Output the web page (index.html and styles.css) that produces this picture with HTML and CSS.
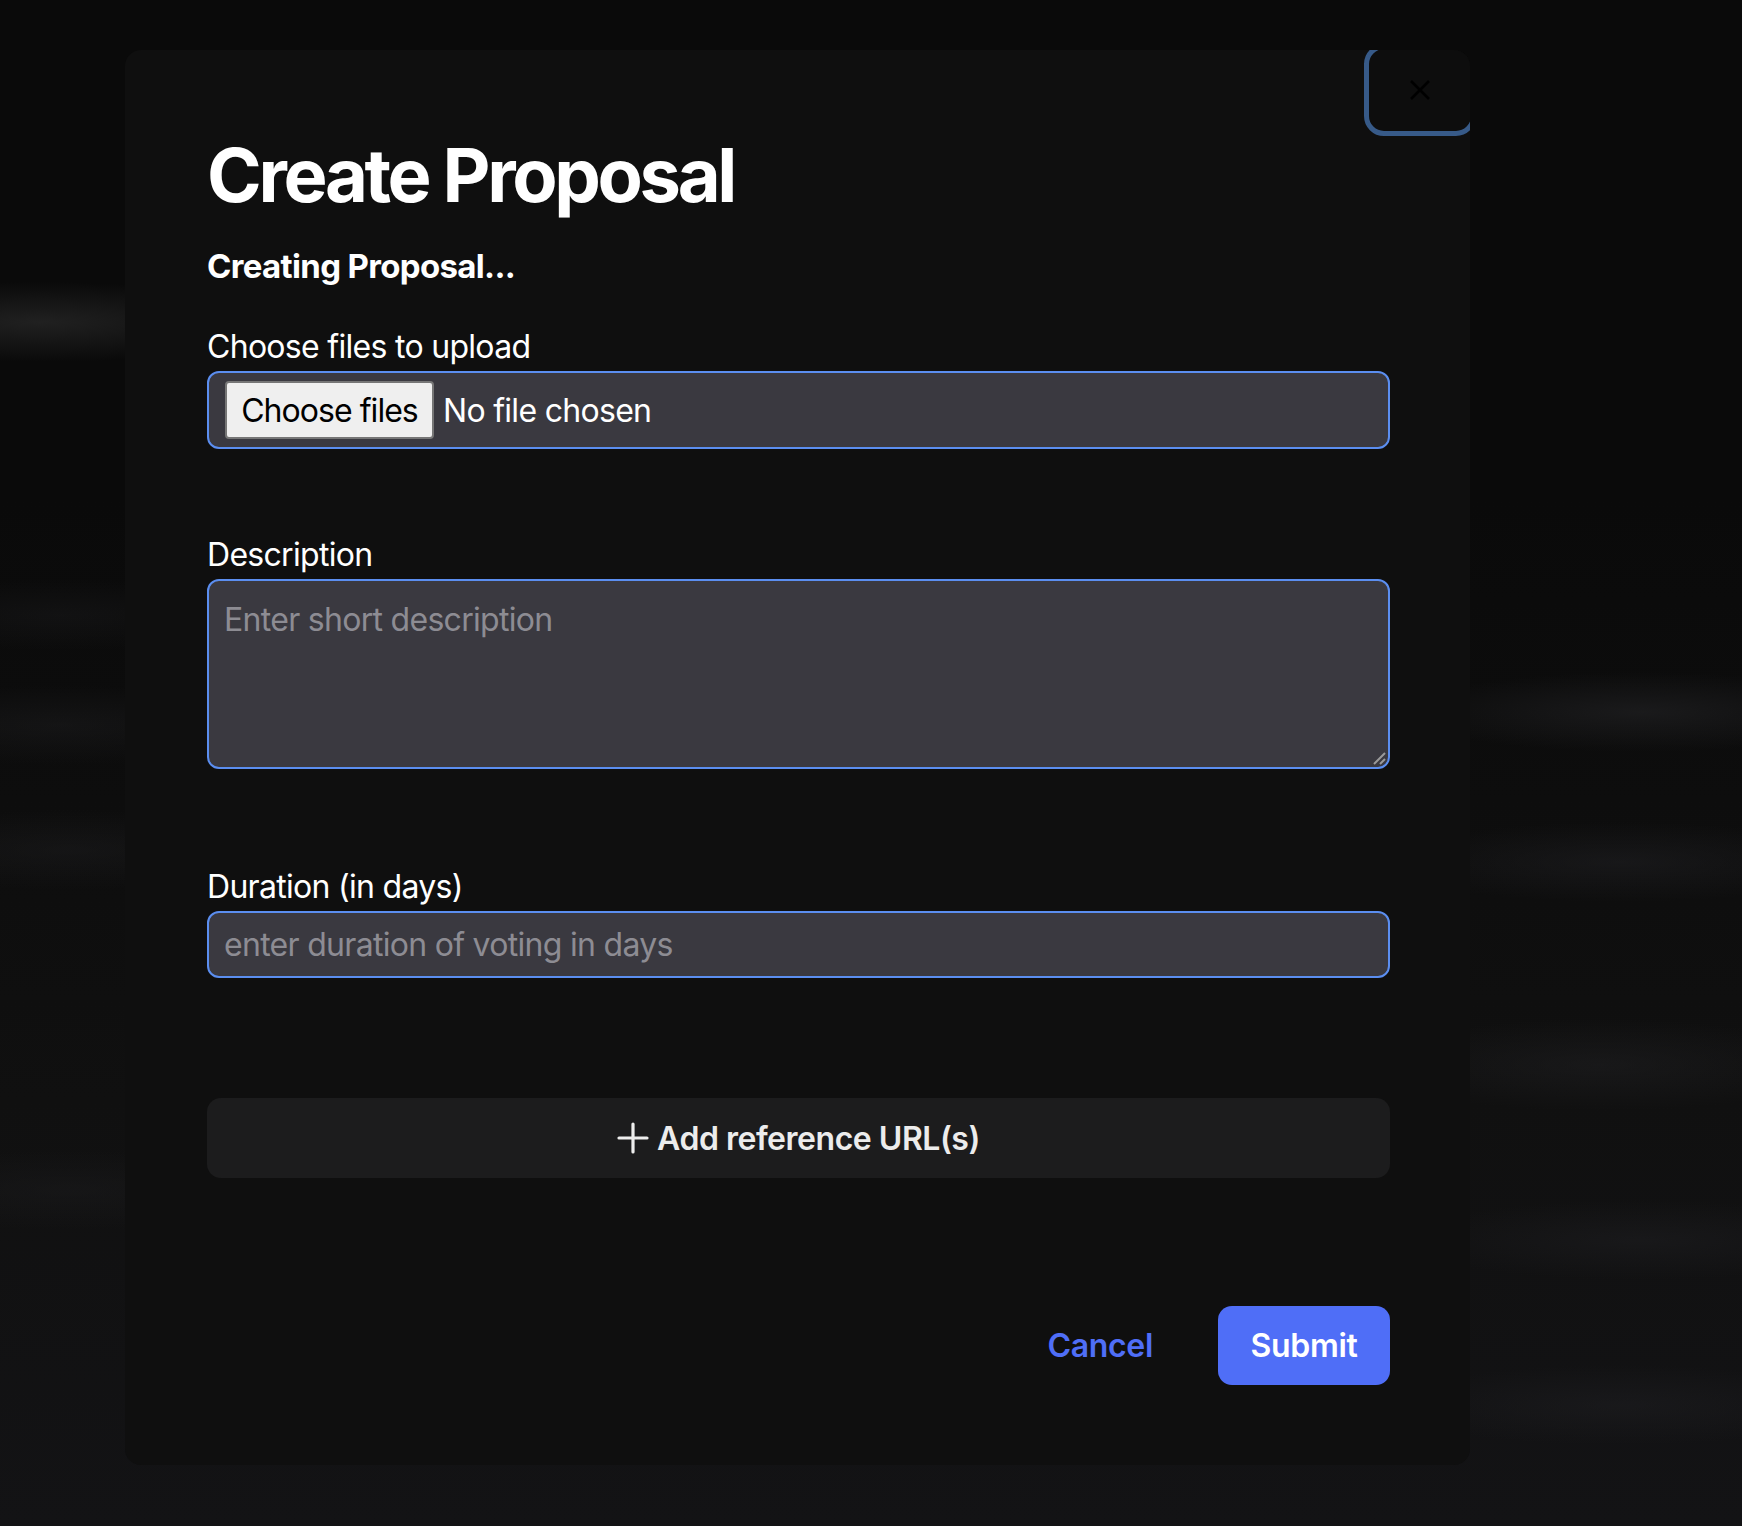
FILE: index.html
```html
<!DOCTYPE html>
<html lang="en">
<head>
<meta charset="utf-8">
<title>Create Proposal</title>
<link rel="stylesheet" href="styles.css">
</head>
<body>
<div class="overlay">
  <div class="modal">
    <button class="close-btn" aria-label="Close">
      <svg width="22" height="22" viewBox="0 0 22 22"><path d="M2 2 L20 20 M20 2 L2 20" stroke="#000" stroke-width="2.6" fill="none"/></svg>
    </button>
    <h1 class="title">Create Proposal</h1>
    <p class="status">Creating Proposal...</p>

    <div class="field field-files">
      <label class="label">Choose files to upload</label>
      <div class="file-box">
        <span class="file-btn">Choose files</span>
        <span class="file-name">No file chosen</span>
      </div>
    </div>

    <div class="field field-desc">
      <label class="label">Description</label>
      <div class="textarea-wrap">
        <textarea class="textarea" placeholder="Enter short description"></textarea>
        <svg class="grip" width="14" height="14" viewBox="0 0 14 14"><path d="M13 2 L2 13 M13 8 L8 13" stroke="#9a9a9a" stroke-width="2" fill="none"/></svg>
      </div>
    </div>

    <div class="field field-dur">
      <label class="label">Duration (in days)</label>
      <input class="input" type="text" placeholder="enter duration of voting in days">
    </div>

    <button class="add-ref">
      <svg class="plus" width="32" height="32" viewBox="0 0 32 32"><path d="M16 2 V30 M2 16 H30" stroke="#ededed" stroke-width="3.2" stroke-linecap="round" fill="none"/></svg>
      <span>Add reference URL(s)</span>
    </button>

    <div class="footer">
      <button class="cancel">Cancel</button>
      <button class="submit">Submit</button>
    </div>
  </div>
</div>
</body>
</html>
```

FILE: styles.css
```css
* { box-sizing: border-box; }

html, body {
  margin: 0;
  padding: 0;
}

body {
  font-family: Inter, "Noto Sans", "Liberation Sans", sans-serif;
  color: #fff;
  min-height: 1526px;
  background-color: #0b0b0b;
  background-image:
    radial-gradient(ellipse 240px 40px at 40px 322px, rgba(38,38,38,0.8), rgba(38,38,38,0) 100%),
    radial-gradient(ellipse 200px 36px at 60px 615px, rgba(28,28,30,0.4), rgba(28,28,30,0) 100%),
    radial-gradient(ellipse 220px 40px at 60px 725px, rgba(30,30,32,0.45), rgba(30,30,32,0) 100%),
    radial-gradient(ellipse 220px 40px at 70px 850px, rgba(30,30,32,0.45), rgba(30,30,32,0) 100%),
    radial-gradient(ellipse 220px 40px at 70px 1190px, rgba(30,30,32,0.4), rgba(30,30,32,0) 100%),
    radial-gradient(ellipse 240px 40px at 1640px 712px, rgba(32,32,34,0.7), rgba(32,32,34,0) 100%),
    radial-gradient(ellipse 240px 40px at 1620px 862px, rgba(30,30,33,0.6), rgba(30,30,33,0) 100%),
    radial-gradient(ellipse 240px 46px at 1600px 1065px, rgba(30,30,32,0.6), rgba(30,30,32,0) 100%),
    radial-gradient(ellipse 240px 40px at 1640px 1240px, rgba(30,30,33,0.55), rgba(30,30,33,0) 100%),
    radial-gradient(ellipse 240px 40px at 1620px 1405px, rgba(30,30,33,0.55), rgba(30,30,33,0) 100%),
    linear-gradient(to bottom, #0a0a0a 0px, #0a0a0a 500px, #101010 1100px, #131315 1526px);
}

.overlay {
  padding: 50px 0 0 125px;
}

.modal {
  position: relative;
  width: 1345px;
  height: 1415px;
  padding: 80px 80px 80px 82px;
  background: #0f0f0f;
  border-radius: 16px;
  overflow: hidden;
  display: flex;
  flex-direction: column;
}

.close-btn {
  position: absolute;
  top: -6px;
  right: -6px;
  width: 112px;
  height: 92px;
  border: 5px solid #375a88;
  border-radius: 20px;
  background: #0d0d0d;
  display: flex;
  align-items: center;
  justify-content: center;
  padding: 0;
}

.title {
  margin: 0;
  font-size: 74px;
  line-height: 91px;
  font-weight: 700;
  letter-spacing: -0.045em;
  color: #fff;
}

.status {
  margin: 20px 0 0;
  font-size: 33px;
  line-height: 51px;
  font-weight: 700;
  letter-spacing: -0.02em;
}

.field {
  display: flex;
  flex-direction: column;
}

.field-files { margin-top: 31px; }
.field-desc { margin-top: 82px; }
.field-dur { margin-top: 94px; }

.label {
  font-size: 32px;
  line-height: 48px;
  font-weight: 400;
  letter-spacing: -0.022em;
  color: #fff;
}

.file-box {
  height: 78px;
  border: 2px solid #5b8ef0;
  border-radius: 12px;
  background: #3a3940;
  padding: 8px 16px;
  display: flex;
  align-items: center;
  gap: 9px;
}

.file-btn {
  height: 58px;
  width: 209px;
  display: flex;
  align-items: center;
  justify-content: center;
  background: #efefef;
  border: 2px solid #767676;
  border-radius: 4px;
  color: #000;
  font-size: 32px;
  letter-spacing: -0.03em;
}

.file-name {
  font-size: 32px;
  letter-spacing: -0.022em;
  color: #fff;
}

.textarea-wrap {
  position: relative;
}

.textarea {
  display: block;
  width: 100%;
  height: 190px;
  border: 2px solid #5b8ef0;
  border-radius: 12px;
  background: #3a3940;
  padding: 15px 15px 13px;
  font-family: inherit;
  font-size: 32px;
  line-height: 48px;
  letter-spacing: -0.022em;
  color: #fff;
  outline: none;
  resize: none;
}

.grip {
  position: absolute;
  right: 4px;
  bottom: 4px;
}

.input {
  display: block;
  width: 100%;
  height: 67px;
  border: 2px solid #5b8ef0;
  border-radius: 12px;
  background: #3a3940;
  padding: 0 15px;
  font-family: inherit;
  font-size: 32px;
  letter-spacing: -0.022em;
  color: #fff;
  outline: none;
}

.textarea::placeholder,
.input::placeholder {
  color: #8d8c93;
}

.add-ref {
  margin-top: 120px;
  height: 80px;
  width: 100%;
  border: none;
  border-radius: 14px;
  background: #1c1c1d;
  color: #ececec;
  font-family: inherit;
  font-size: 32px;
  font-weight: 600;
  letter-spacing: -0.015em;
  display: flex;
  align-items: center;
  justify-content: center;
  gap: 8px;
}

.plus { display: block; }

.footer {
  margin-top: 128px;
  display: flex;
  justify-content: flex-end;
  align-items: center;
  gap: 33px;
}

.cancel,
.submit {
  height: 79px;
  font-family: inherit;
  font-size: 32px;
  font-weight: 600;
  letter-spacing: -0.01em;
  border: none;
  border-radius: 14px;
  padding: 0 32px;
}

.cancel {
  background: transparent;
  color: #4f6ef7;
}

.submit {
  width: 172px;
  background: #4f6ef7;
  color: #fff;
  padding: 0;
}
```
